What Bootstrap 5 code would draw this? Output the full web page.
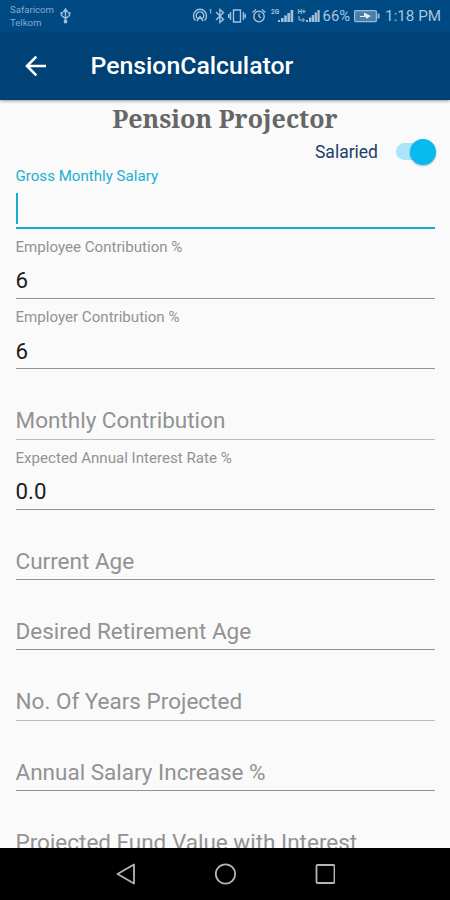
<!DOCTYPE html>
<html lang="en">
<head>
<meta charset="utf-8">
<meta name="viewport" content="width=device-width, initial-scale=1">
<title>PensionCalculator</title>
<link rel="stylesheet" href="https://cdn.jsdelivr.net/npm/bootstrap@5.3.0/dist/css/bootstrap.min.css">
<style>
body{font-family:Roboto,"Liberation Sans",sans-serif;background:#fafafa;height:900px}
svg{display:block;flex:none}
.status-bar{height:32px;background:#004a84;color:#a3c0db;padding:0 9px 0 10px}
.carrier{font-size:9.6px;line-height:13px;padding-top:3px;width:50px;color:#86abcd}
.status-text{font-size:15.2px;line-height:32px;color:#a9c5de}
.percent{font-size:14.800px}
.app-bar{height:68.200px;background:#004176;box-shadow:0 1px 3px rgba(0,0,0,.4);padding:0 0 0 23px;z-index:2}
.app-title{font-size:24.8px;font-weight:500;line-height:30px;margin-left:41.5px}
.screen-title{font-family:"Noto Serif","DejaVu Serif Condensed","DejaVu Serif",serif;font-stretch:condensed;font-weight:700;font-size:25px;line-height:36px;color:#666;height:36px}
.switch-row{height:32.2px;padding-right:14px}
.switch-label{font-size:17.5px;color:#1d3e68;line-height:32px;margin-right:18px}
.toggle{width:40px;height:26px;margin-top:2.500px}
.toggle-track{width:36px;height:17px;border-radius:9px;background:#a9e5f8}
.toggle-knob{width:26px;height:26px;top:0;right:0;background:#06b9ee;box-shadow:0 1px 2px rgba(0,0,0,.3)}
.fields{padding:0 15px 0 15.500px;gap:10px}
.field{height:60.3px;border-bottom:1.3px solid #929292;flex:none}
.field-label{font-size:15.1px;line-height:17px;height:17px;color:#929292;white-space:nowrap}
.field-value{font-size:22.3px;line-height:26px;color:#1c1c1c;margin-bottom:4.500px}
.field-hint{font-size:22.5px;line-height:26px;color:#929292;margin-bottom:5.500px;white-space:nowrap}
.field.active{border-bottom:2px solid #19acd0}
.field.active .field-label{color:#20afd0}
.field.pale{border-color:#bdbdbd}
.caret{width:2.500px;height:31px;background:#19acd0;margin-bottom:3px}
.nav-keys{height:52.5px;background:#000;z-index:2}
</style>
</head>
<body class="d-flex flex-column overflow-hidden">
<header class="status-bar d-flex justify-content-between flex-shrink-0">
  <div class="d-flex">
    <div class="carrier">Safaricom<br>Telkom</div>
    <svg width="11" height="32" viewBox="0 0 11 32" fill="none" stroke="#a3c0db" stroke-width="1.4"><path d="M5.5 10v12M1.5 12.500v3l4 3 4-3v-3"/><path d="M3.800 11.500l1.700-2.500 1.700 2.500z" fill="#a3c0db"/><circle cx="5.500" cy="21.500" r="1.200" fill="#a3c0db"/><path d="M.500 13h2.500M8 13h2.500"/></svg>
  </div>
  <div class="d-flex">
    <svg width="133" height="32" viewBox="192 0 133 32" fill="none" stroke="#a3c0db" stroke-width="1.4">
      <path d="M197.500 20.500a6.500 6.500 0 1 1 9 0M199.500 18.500a3.800 3.800 0 1 1 5 0M202 16v3M199 21l3-4.500 3 4.500"/>
      <path d="M211.500 10l1.200-.8v4.300" stroke-width="1"/>
      <path d="M218 12l7.500 7.500-3.600 3V9.500l3.600 3L218 20"/>
      <path d="M235.500 10h7v12h-7zM232.500 12v8M245.500 12v8M230.700 14v4M247.300 14v4"/>
      <circle cx="261" cy="16.500" r="5.200"/><path d="M261 13.500v3l2 1.500M254.500 12.500l3.500-3M267.500 12.500l-3.500-3"/>
      <g fill="#a3c0db" stroke="none"><path d="M280 20h2v2h-2zM283 18h2.600v4H283zM286.200 15.500h2.600V22h-2.600zM289.400 13h2.600v9h-2.600zM292.600 10h2.600v12h-2.600zM308 20h2v2h-2zM311 17.500h2.300v4.500h-2.300zM313.800 15h2.300v7h-2.300zM316.600 12.500h2.300V22h-2.300zM319.400 10h2.300v12h-2.300z"/>
      <text x="273" y="14" font-size="6.500" font-weight="700">2G</text><text x="299.500" y="14" font-size="6.500" font-weight="700">H+</text></g>
      <path d="M301 16v4h5M304.500 18l2 2-2 2" stroke-width="1"/>
    </svg>
    <span class="status-text percent">66%</span>
    <svg class="ms-1" width="27" height="32" viewBox="0 0 27 32"><rect x=".6" y="10.600" width="21.800" height="11" rx="1" fill="#477eac" stroke="#9ab9d5" stroke-width="1.300"/><path d="M23.500 13.500h2v5h-2z" fill="#9ab9d5"/><path d="M6 16h4V12.500l7 3.500-5 3V17H6z" fill="#e3eef7"/></svg>
    <span class="status-text ms-1">1:18 PM</span>
  </div>
</header>
<nav class="app-bar d-flex align-items-center text-white position-relative flex-shrink-0">
  <svg width="26" height="26" viewBox="0 0 26 26" fill="none" stroke="#fff" stroke-width="2.600"><path d="M23 13H4.500M13.300 3.700L4 13l9.300 9.300"/></svg>
  <span class="app-title">PensionCalculator</span>
</nav>
<main class="flex-fill overflow-hidden">
  <h1 class="screen-title text-center mb-0">Pension Projector</h1>
  <div class="switch-row d-flex justify-content-end align-items-start">
    <span class="switch-label">Salaried</span>
    <div class="toggle position-relative d-flex align-items-center"><div class="toggle-track"></div><div class="toggle-knob rounded-circle position-absolute"></div></div>
  </div>
  <form class="fields d-flex flex-column">
    <div class="field active d-flex flex-column justify-content-between"><div class="field-label">Gross Monthly Salary</div><div class="caret"></div></div>
    <div class="field d-flex flex-column justify-content-between"><div class="field-label">Employee Contribution %</div><div class="field-value">6</div></div>
    <div class="field d-flex flex-column justify-content-between"><div class="field-label">Employer Contribution %</div><div class="field-value">6</div></div>
    <div class="field pale d-flex flex-column justify-content-end"><div class="field-hint">Monthly Contribution</div></div>
    <div class="field d-flex flex-column justify-content-between"><div class="field-label">Expected Annual Interest Rate %</div><div class="field-value">0.0</div></div>
    <div class="field d-flex flex-column justify-content-end"><div class="field-hint">Current Age</div></div>
    <div class="field d-flex flex-column justify-content-end"><div class="field-hint">Desired Retirement Age</div></div>
    <div class="field pale d-flex flex-column justify-content-end"><div class="field-hint">No. Of Years Projected</div></div>
    <div class="field d-flex flex-column justify-content-end"><div class="field-hint">Annual Salary Increase %</div></div>
    <div class="field d-flex flex-column justify-content-end"><div class="field-hint">Projected Fund Value with Interest</div></div>
  </form>
</main>
<footer class="nav-keys d-flex justify-content-center align-items-center flex-shrink-0">
  <svg width="220" height="26" viewBox="0 0 220 26" fill="none" stroke="#b5b5b5" stroke-width="1.800" stroke-linejoin="round"><path d="M2.500 13L19 3.500v19z"/><circle cx="110.500" cy="13" r="9.700"/><rect x="201.500" y="4" width="18" height="18" rx="1"/></svg>
</footer>
<script src="https://cdn.jsdelivr.net/npm/bootstrap@5.3.0/dist/js/bootstrap.bundle.min.js"></script>
</body>
</html>
